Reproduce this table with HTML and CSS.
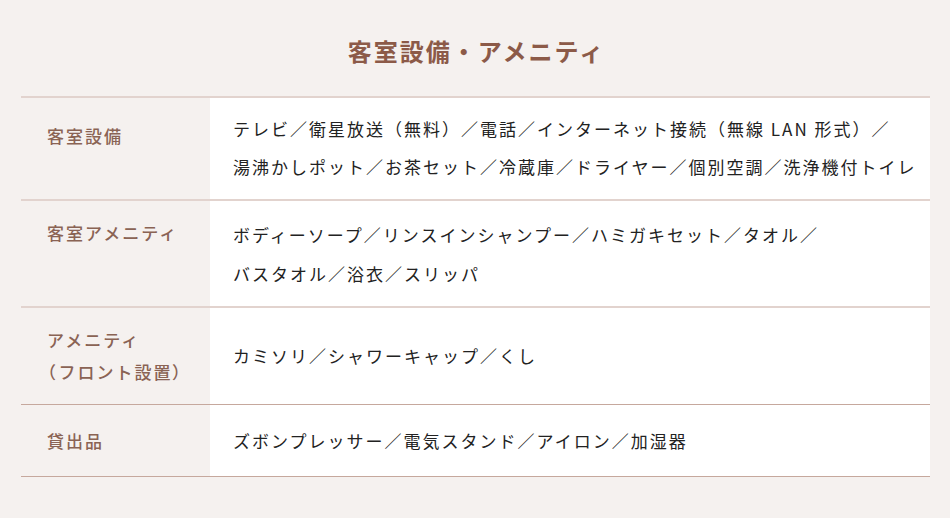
FILE: index.html
```html
<!DOCTYPE html>
<html lang="ja">
<head>
<meta charset="utf-8">
<title>客室設備・アメニティ</title>
<link rel="stylesheet" href="styles.css">
</head>
<body>
<main class="page">
  <h2 class="title">客室設備・アメニティ</h2>
  <div class="spec">
    <div class="row row--first">
      <div class="label label--offset">客室設備</div>
      <div class="value">テレビ／衛星放送（無料）／電話／インターネット接続（無線 LAN 形式）／<br>湯沸かしポット／お茶セット／冷蔵庫／ドライヤー／個別空調／洗浄機付トイレ</div>
    </div>
    <div class="row row--tall">
      <div class="label">客室アメニティ</div>
      <div class="value">ボディーソープ／リンスインシャンプー／ハミガキセット／タオル／<br>バスタオル／浴衣／スリッパ</div>
    </div>
    <div class="row">
      <div class="label">アメニティ<br><span class="paren">（</span>フロント設置<span class="paren">）</span></div>
      <div class="value value--center">カミソリ／シャワーキャップ／くし</div>
    </div>
    <div class="row row--dark">
      <div class="label">貸出品</div>
      <div class="value">ズボンプレッサー／電気スタンド／アイロン／加湿器</div>
    </div>
  </div>
</main>
</body>
</html>
```
FILE: styles.css
```css
* { box-sizing: border-box; }
html, body { margin: 0; padding: 0; }
body {
  background: #f5f1ef;
  font-family: "Noto Sans CJK JP", "Noto Sans", sans-serif;
  color: #222;
}
.page {
  padding: 34px 20px 0 21px;
}
.title {
  margin: 0;
  text-align: center;
  font-size: 24px;
  line-height: 34px;
  font-weight: 700;
  color: #8c5a48;
  letter-spacing: 2px;
  padding-left: 2px;
}
.spec {
  margin-top: 28px;
  border-bottom: 1px solid #c6a89d;
}
.row {
  display: grid;
  grid-template-columns: 189px 1fr;
  align-items: stretch;
  min-height: 72px;
  border-top: 2px solid #e2d3ce;
}
.row--dark {
  border-top: 1px solid #c6a89d;
}
.label {
  background: #f5f1ef;
  padding: 16px 10px 16px 26px;
  font-size: 17px;
  line-height: 32px;
  font-weight: 500;
  letter-spacing: 2px;
  color: #8a6354;
}
.label--offset {
  padding-top: 22px;
}
.paren {
  font-feature-settings: "palt";
  letter-spacing: 3px;
}
.value {
  background: #fff;
  padding: 13px 10px 13px 23px;
  font-size: 17px;
  line-height: 38px;
  letter-spacing: 2px;
  color: #222;
}
.row--first .value {
  padding-top: 12px;
  padding-bottom: 13px;
}
.row--tall .value {
  line-height: 39px;
  padding-top: 14px;
  padding-bottom: 13px;
}
.value--center {
  display: flex;
  align-items: center;
}
.row--dark .value,
.row--dark .label {
  display: flex;
  align-items: center;
}
```
